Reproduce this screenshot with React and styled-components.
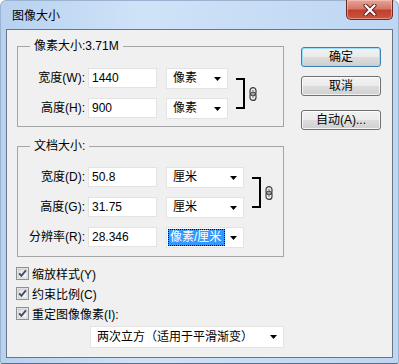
import React from "react";
import styled, { createGlobalStyle } from "styled-components";

const GlobalStyle = createGlobalStyle`
  html, body {
    margin: 0;
    padding: 0;
  }
  body {
    width: 399px;
    height: 364px;
    overflow: hidden;
    background: #ffffff;
    font-family: "Liberation Sans", "Noto Sans CJK SC", sans-serif;
    font-size: 12px;
    color: #000;
  }
`;

const Window = styled.div`
  box-sizing: border-box;
  width: 399px;
  height: 364px;
  display: flex;
  flex-direction: column;
  padding: 0 5px 5px 5px;
  border: 1px solid #9ab3d1;
  border-bottom-color: #5d6f86;
  border-radius: 6px 6px 2px 2px;
  background: linear-gradient(to right, #b7d1ef 0%, #cfe3f8 35%, #c6dcf5 70%, #bed6f2 100%);
`;

const TitleBar = styled.div`
  height: 28px;
  display: flex;
  align-items: flex-start;
  flex-shrink: 0;
`;

const Title = styled.div`
  margin: 7px 0 0 6px;
  line-height: 16px;
  font-size: 12px;
  color: #000;
`;

const CloseButton = styled.div`
  box-sizing: border-box;
  margin: -1px 0 0 auto;
  width: 47px;
  height: 20px;
  display: flex;
  align-items: center;
  justify-content: center;
  border: 1px solid #6b2a22;
  border-top: none;
  border-radius: 0 0 5px 5px;
  background: linear-gradient(to bottom, #e7a597 0%, #d4786a 45%, #c13f2c 55%, #cc5540 100%);
  box-shadow: inset 0 0 0 1px rgba(255, 210, 200, 0.5);
`;

const Client = styled.div`
  flex: 1;
  display: flex;
  background: #f0f0f0;
  border: 1px solid #66778a;
  padding: 16px 0 0 10px;
`;

const LeftColumn = styled.div`
  width: 267px;
  display: flex;
  flex-direction: column;
`;

const RightColumn = styled.div`
  margin-left: 17px;
  padding-top: 1px;
  display: flex;
  flex-direction: column;
`;

const Group = styled.div`
  position: relative;
  box-sizing: border-box;
  width: 267px;
  border: 1px solid #a5a5a5;
  margin-top: ${(p) => p.$mt || 0}px;
  padding: ${(p) => p.$pt}px 0 ${(p) => p.$pb}px 0;
  display: flex;
  align-items: flex-start;
`;

const Legend = styled.div`
  position: absolute;
  top: -9px;
  left: 12px;
  padding: 0 4px;
  line-height: 16px;
  background: #f0f0f0;
`;

const Rows = styled.div`
  display: flex;
  flex-direction: column;
  gap: 9px;
`;

const Row = styled.div`
  height: 21px;
  display: flex;
  align-items: flex-start;
`;

const Label = styled.div`
  width: 67px;
  margin-right: 3px;
  text-align: right;
  line-height: 20px;
  white-space: nowrap;
`;

const Field = styled.input`
  box-sizing: border-box;
  width: 69px;
  height: 20px;
  margin: 0 9px 0 0;
  padding: 0 0 0 3px;
  border: 1px solid #e3e3e3;
  background: #fff;
  font: inherit;
  line-height: 18px;
  color: #000;
  outline: none;
`;

const Select = styled.div`
  box-sizing: border-box;
  width: ${(p) => p.$w}px;
  height: ${(p) => p.$h || 21}px;
  display: flex;
  align-items: center;
  justify-content: space-between;
  padding: 0 6px 0 ${(p) => (p.$selected ? 1 : 6)}px;
  margin-left: ${(p) => p.$ml || 0}px;
  border: 1px solid #e3e3e3;
  background: #fff;
  white-space: nowrap;
`;

const Value = styled.span`
  line-height: 17px;
  ${(p) =>
    p.$selected &&
    `
    background: #3399ff;
    color: #fff;
    outline: 1px dotted #000;
    outline-offset: -1px;
    padding: 0 4px 0 2px;
  `}
`;

const BracketBox = styled.div`
  display: flex;
  align-items: center;
  margin: 10px 0 0 8px;
  height: 31px;
`;

const Bracket = styled.div`
  box-sizing: border-box;
  width: 9px;
  height: 31px;
  border: 2px solid #000;
  border-left: none;
`;

const Checks = styled.div`
  margin: 6px 0 0 -1px;
  display: flex;
  flex-direction: column;
`;

const CheckRow = styled.div`
  height: 20px;
  display: flex;
  align-items: center;
  gap: 3px;
  white-space: nowrap;
`;

const Button = styled.div`
  box-sizing: border-box;
  width: 80px;
  height: 20px;
  margin-top: ${(p) => p.$mt || 0}px;
  display: flex;
  align-items: center;
  justify-content: center;
  border: 1px solid ${(p) => (p.$default ? "#3c7fb1" : "#707070")};
  border-radius: 3px;
  background: linear-gradient(to bottom, #f2f2f2 0%, #ebebeb 48%, #dddddd 52%, #cfcfcf 100%);
  box-shadow: inset 0 0 0 1px ${(p) => (p.$default ? "#9fdcf7" : "rgba(255,255,255,0.75)")};
  line-height: 16px;
`;

const Arrow = () => (
  <svg width="7" height="4" viewBox="0 0 7 4">
    <polygon points="0,0 7,0 3.5,4" fill="#000" />
  </svg>
);

const Chain = () => (
  <svg width="8" height="14" viewBox="0 0 8 14" style={{ marginLeft: 4 }}>
    <rect x="1" y="0.6" width="6" height="8" rx="3" fill="#e6e6e6" stroke="#3f3f3f" strokeWidth="1.2" />
    <rect x="1" y="5.4" width="6" height="8" rx="3" fill="none" stroke="#3f3f3f" strokeWidth="1.2" />
    <line x1="4" y1="3" x2="4" y2="11" stroke="#7a7a7a" strokeWidth="1.1" />
  </svg>
);

const CheckBox = () => (
  <svg width="13" height="13" viewBox="0 0 13 13">
    <defs>
      <linearGradient id="cbg" x1="0" y1="0" x2="1" y2="1">
        <stop offset="0" stopColor="#dcdcdc" />
        <stop offset="1" stopColor="#fbfbfb" />
      </linearGradient>
    </defs>
    <rect x="0.5" y="0.5" width="12" height="12" fill="#f4f4f4" stroke="#8e8f8f" />
    <rect x="2" y="2" width="9" height="9" fill="url(#cbg)" stroke="#b6b6b6" strokeWidth="0.6" />
    <path d="M3.2 6.3 L5.4 8.8 L9.9 3.3" fill="none" stroke="#3b4e77" strokeWidth="1.9" />
  </svg>
);

const CloseX = () => (
  <svg width="14" height="12" viewBox="0 0 14 12">
    <path d="M2.5 1.5 L11.5 10.5 M11.5 1.5 L2.5 10.5" stroke="#5e2018" strokeWidth="4" strokeLinecap="round" />
    <path d="M2.5 1.5 L11.5 10.5 M11.5 1.5 L2.5 10.5" stroke="#ffffff" strokeWidth="2.2" strokeLinecap="round" />
  </svg>
);

const pixelRows = [
  { label: "宽度(W):", value: "1440", unit: "像素" },
  { label: "高度(H):", value: "900", unit: "像素" },
];

const docRows = [
  { label: "宽度(D):", value: "50.8", unit: "厘米" },
  { label: "高度(G):", value: "31.75", unit: "厘米" },
  { label: "分辨率(R):", value: "28.346", unit: "像素/厘米", selected: true },
];

const checks = ["缩放样式(Y)", "约束比例(C)", "重定图像像素(I):"];

function App() {
  return (
    <>
      <GlobalStyle />
      <Window>
        <TitleBar>
          <Title>图像大小</Title>
          <CloseButton>
            <CloseX />
          </CloseButton>
        </TitleBar>
        <Client>
          <LeftColumn>
            <Group $pt={21} $pb={7}>
              <Legend>像素大小:3.71M</Legend>
              <Rows>
                {pixelRows.map((r) => (
                  <Row key={r.label}>
                    <Label>{r.label}</Label>
                    <Field defaultValue={r.value} readOnly />
                    <Select $w={62}>
                      <Value>{r.unit}</Value>
                      <Arrow />
                    </Select>
                  </Row>
                ))}
              </Rows>
              <BracketBox>
                <Bracket />
                <Chain />
              </BracketBox>
            </Group>

            <Group $mt={19} $pt={20} $pb={8}>
              <Legend>文档大小:</Legend>
              <Rows>
                {docRows.map((r) => (
                  <Row key={r.label}>
                    <Label>{r.label}</Label>
                    <Field defaultValue={r.value} readOnly />
                    <Select $w={78} $selected={r.selected}>
                      <Value $selected={r.selected}>{r.unit}</Value>
                      <Arrow />
                    </Select>
                  </Row>
                ))}
              </Rows>
              <BracketBox>
                <Bracket />
                <Chain />
              </BracketBox>
            </Group>

            <Checks>
              {checks.map((c) => (
                <CheckRow key={c}>
                  <CheckBox />
                  <span>{c}</span>
                </CheckRow>
              ))}
            </Checks>

            <Select $w={194} $h={22} $ml={73} style={{ marginTop: 3 }}>
              <Value>两次立方（适用于平滑渐变）</Value>
              <Arrow />
            </Select>
          </LeftColumn>

          <RightColumn>
            <Button $default>确定</Button>
            <Button $mt={9}>取消</Button>
            <Button $mt={14}>自动(A)...</Button>
          </RightColumn>
        </Client>
      </Window>
    </>
  );
}

export default App;
